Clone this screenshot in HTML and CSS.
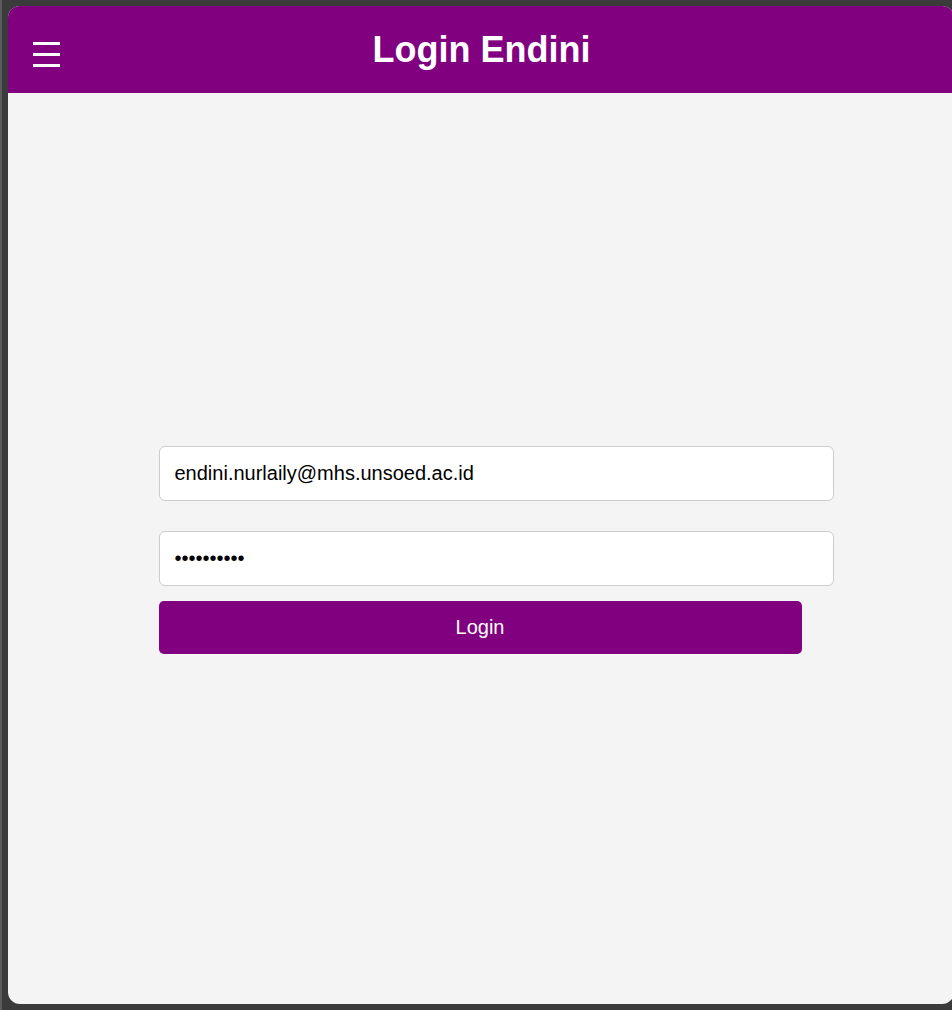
FILE: index.html
```html
<!DOCTYPE html>
<html lang="id">
<head>
<meta charset="utf-8">
<title>Login Endini</title>
<link rel="stylesheet" href="styles.css">
</head>
<body>
<div class="window">
  <header class="topbar">
    <button class="menu-btn" aria-label="Menu">
      <svg width="28" height="26" viewBox="0 0 28 26">
        <rect x="0" y="1" width="27" height="3" fill="#fff"/>
        <rect x="0" y="12" width="27" height="3" fill="#fff"/>
        <rect x="0" y="23" width="27" height="3" fill="#fff"/>
      </svg>
    </button>
    <h1 class="title">Login Endini</h1>
    <div class="spacer"></div>
  </header>
  <main class="content">
    <form class="login-form">
      <input class="field field-email" type="email" value="endini.nurlaily@mhs.unsoed.ac.id">
      <input class="field field-pass" type="password" value="abcdefghij">
      <button class="login-btn" type="button">Login</button>
    </form>
  </main>
</div>
</body>
</html>
```
FILE: styles.css
```css
html, body {
  margin: 0;
  overflow: hidden;
}
body {
  background: #3b3b3b;
  border-left: 2px solid #5c5c5c;
  padding: 6px 0 6px 6px;
  height: 1010px;
  box-sizing: border-box;
  font-family: "Liberation Sans", Arial, sans-serif;
}
.window {
  width: 946px;
  height: 998px;
  background: #f4f4f4;
  border-radius: 12px;
  overflow: hidden;
  display: flex;
  flex-direction: column;
}
.topbar {
  height: 87px;
  flex: none;
  background: #800080;
  display: grid;
  grid-template-columns: 1fr auto 1fr;
  align-items: center;
  padding-left: 25px;
  padding-right: 0;
  box-sizing: border-box;
}
.menu-btn {
  justify-self: start;
  background: none;
  border: none;
  padding: 0;
  margin-top: 9px;
  display: flex;
  cursor: pointer;
}
.title {
  margin: 0;
  color: #fff;
  font-size: 36px;
  font-weight: bold;
  line-height: 1;
  margin-top: 0;
  position: relative;
  left: -12px;
}
.content {
  flex: 1;
  display: flex;
  align-items: center;
  justify-content: center;
  padding-left: 0;
}
.login-form {
  width: 643px;
  display: flex;
  flex-direction: column;
  margin-top: 3px;
  margin-left: -2px;
}
.field {
  width: 100%;
  box-sizing: content-box;
  padding: 15px;
  border: 1px solid #cccccc;
  border-radius: 6px;
  background: #fff;
  font-family: "Liberation Sans", Arial, sans-serif;
  font-size: 20px;
  line-height: 23px;
  height: 23px;
  color: #000;
  outline: none;
}
.field-pass {
  margin-top: 30px;
}
.login-btn {
  margin-top: 15px;
  width: 100%;
  border: none;
  border-radius: 5px;
  background: #800080;
  color: #fff;
  font-family: "Liberation Sans", Arial, sans-serif;
  font-size: 20px;
  line-height: 23px;
  padding: 15px;
  cursor: pointer;
}
```
